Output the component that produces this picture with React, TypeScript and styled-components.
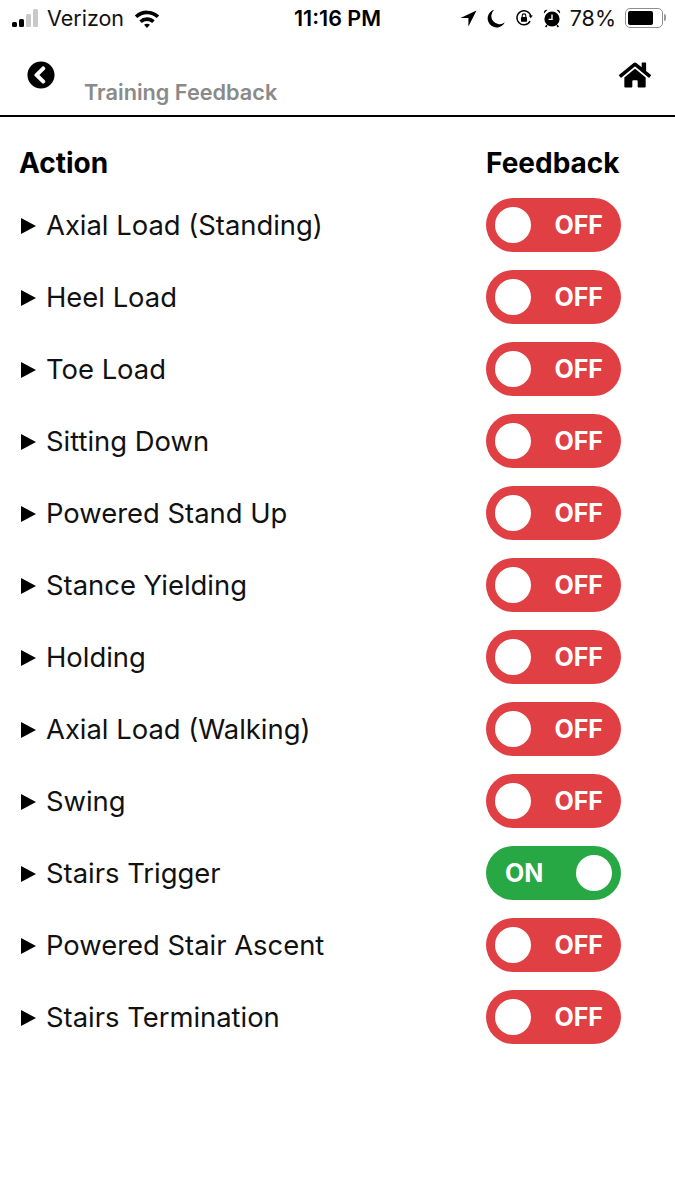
import React from 'react';
import styled, { createGlobalStyle } from 'styled-components';
import { FaChevronCircleLeft, FaHome } from 'react-icons/fa';

const ACTIONS = [
  { name: 'Axial Load (Standing)', on: false },
  { name: 'Heel Load', on: false },
  { name: 'Toe Load', on: false },
  { name: 'Sitting Down', on: false },
  { name: 'Powered Stand Up', on: false },
  { name: 'Stance Yielding', on: false },
  { name: 'Holding', on: false },
  { name: 'Axial Load (Walking)', on: false },
  { name: 'Swing', on: false },
  { name: 'Stairs Trigger', on: true },
  { name: 'Powered Stair Ascent', on: false },
  { name: 'Stairs Termination', on: false },
];

function App() {
  return (
    <Page>
      <GlobalStyle />
      <StatusBar>
        <StatusLeft>
          <Signal>
            <SignalBar $height={5} $active />
            <SignalBar $height={8} $active />
            <SignalBar $height={13} />
            <SignalBar $height={18} />
          </Signal>
          <Carrier>Verizon</Carrier>
          <svg width="28" height="21" viewBox="0 0 26 20" aria-hidden="true">
            <path d="M13 2.5c4.5 0 8.6 1.8 11.6 4.6l-2.4 2.5A13.2 13.2 0 0 0 13 6a13.2 13.2 0 0 0-9.2 3.6L1.400 7.100A16.800 16.800 0 0 1 13 2.500z" fill="#000" />
            <path d="M13 8.900c2.800 0 5.400 1.100 7.300 2.900l-2.400 2.500A7.100 7.100 0 0 0 13 12.400a7.100 7.100 0 0 0-4.900 1.900l-2.400-2.500A10.500 10.500 0 0 1 13 8.900z" fill="#000" />
            <path d="M13 15c1.100 0 2.100.4 2.800 1L13 19l-2.800-3c.7-.6 1.700-1 2.800-1z" fill="#000" />
          </svg>
        </StatusLeft>
        <Clock>11:16 PM</Clock>
        <StatusRight>
          <StatusIcons>
            <svg width="17" height="17" viewBox="0 0 18 18" aria-hidden="true">
              <path d="M17.500.5.500 8.600h8.400v8.900z" fill="#000" />
            </svg>
            <svg width="18" height="19" viewBox="0 0 18 19" aria-hidden="true">
              <path d="M7.200.8A9 9 0 1 0 17.800 13.300 8 8 0 0 1 7.200.8z" fill="#000" />
            </svg>
            <svg width="18" height="18" viewBox="0 0 20 20" aria-hidden="true">
              <path d="M16.800 13.500A7.800 7.800 0 1 1 17.600 8" fill="none" stroke="#000" strokeWidth="1.600" />
              <path d="M15.300 7.200h4.400l-2.200 3z" fill="#000" />
              <rect x="6.600" y="9" width="6.800" height="5.200" rx="1" fill="#000" />
              <path d="M8 9V7.400a2 2 0 0 1 4 0V9" fill="none" stroke="#000" strokeWidth="1.200" />
            </svg>
            <svg width="18" height="20" viewBox="0 0 18 20" aria-hidden="true">
              <circle cx="9" cy="11" r="7.600" fill="#000" />
              <path d="M9 6.500V11.400H5.600" fill="none" stroke="#fff" strokeWidth="1.400" />
              <path d="M1 5.500 4.600 1.800a3 3 0 0 0-3.600 3.700zM17 5.500 13.400 1.800a3 3 0 0 1 3.600 3.700z" fill="#000" />
              <path d="M4 17.200 2.600 19M14 17.200 15.400 19" stroke="#000" strokeWidth="1.600" />
            </svg>
          </StatusIcons>
          <Percent>78%</Percent>
          <Battery>
            <BatteryFill />
          </Battery>
        </StatusRight>
      </StatusBar>

      <Header>
        <BackButton aria-label="Back">
          <FaChevronCircleLeft size={28} />
        </BackButton>
        <Title>Training Feedback</Title>
        <HomeButton aria-label="Home">
          <FaHome size={32} />
        </HomeButton>
      </Header>

      <Table>
        <HeadRow>
          <HeadCell>Action</HeadCell>
          <FeedbackHead>Feedback</FeedbackHead>
        </HeadRow>
        {ACTIONS.map((action) => (
          <Row key={action.name}>
            <Label>
              <Arrow />
              {action.name}
            </Label>
            <Toggle $on={action.on}>
              <ToggleText>{action.on ? 'ON' : 'OFF'}</ToggleText>
              <Knob />
            </Toggle>
          </Row>
        ))}
      </Table>
    </Page>
  );
}

const GlobalStyle = createGlobalStyle`
  html, body {
    margin: 0;
    padding: 0;
    background: #fff;
  }
  body {
    font-family: Inter, "Liberation Sans", sans-serif;
    color: #000;
  }
`;

const Page = styled.div`
  width: 675px;
  height: 1200px;
  overflow: hidden;
  background: #fff;
`;

const StatusBar = styled.div`
  display: grid;
  grid-template-columns: 1fr auto 1fr;
  align-items: center;
  height: 36px;
  padding: 0 12px;
`;

const StatusLeft = styled.div`
  display: flex;
  align-items: center;
  gap: 9px;
`;

const Signal = styled.div`
  display: flex;
  align-items: flex-end;
  gap: 2px;
  height: 18px;
`;

const SignalBar = styled.span<{ $height: number; $active?: boolean }>`
  width: 5px;
  height: ${(props) => props.$height}px;
  border-radius: 1.5px;
  background: ${(props) => (props.$active ? '#000' : '#c9c9c9')};
`;

const Carrier = styled.span`
  font-size: 21.5px;
  color: #111;
`;

const Clock = styled.span`
  font-size: 21.5px;
  font-weight: 600;
`;

const StatusRight = styled.div`
  display: flex;
  align-items: center;
  justify-content: flex-end;
  gap: 9px;
`;

const StatusIcons = styled.div`
  display: flex;
  align-items: center;
  gap: 10px;
`;

const Percent = styled.span`
  font-size: 21.5px;
  color: #111;
`;

const Battery = styled.div`
  position: relative;
  display: flex;
  width: 38px;
  height: 20px;
  padding: 2px;
  box-sizing: border-box;
  border: 1.5px solid #8e8e8e;
  border-radius: 5px;

  &::after {
    content: '';
    position: absolute;
    top: 5px;
    right: -4px;
    width: 2px;
    height: 7px;
    border-radius: 0 2px 2px 0;
    background: #999;
  }
`;

const BatteryFill = styled.div`
  width: 78%;
  border-radius: 2px;
  background: #000;
`;

const Header = styled.header`
  display: flex;
  height: 81px;
  padding: 25px 24px 0 27px;
  box-sizing: border-box;
  border-bottom: 2px solid #000;
`;

const BackButton = styled.div`
  display: flex;
  width: 28px;
  height: 28px;
  color: #000;
`;

const Title = styled.h1`
  flex: 1;
  margin: 18px 0 0 29px;
  font-size: 21.7px;
  line-height: 26px;
  font-weight: 600;
  color: #8a8a8a;
`;

const HomeButton = styled.div`
  display: flex;
  width: 32px;
  height: 32px;
  margin-top: -2px;
  color: #000;
`;

const Table = styled.div`
  display: flex;
  flex-direction: column;
  padding: 0 54px 0 19px;
`;

const HeadRow = styled.div`
  display: flex;
  align-items: center;
  justify-content: space-between;
  height: 64px;
  margin: 14px 0 3px;
`;

const HeadCell = styled.div`
  font-size: 28px;
  font-weight: 700;
  line-height: 32px;
`;

const FeedbackHead = styled(HeadCell)`
  width: 135px;
  white-space: nowrap;
`;

const Row = styled.div`
  display: flex;
  align-items: center;
  justify-content: space-between;
  height: 54px;
  margin-bottom: 18px;
`;

const Label = styled.div`
  display: flex;
  align-items: center;
  font-size: 27.4px;
  color: #111;
`;

const Arrow = styled.span`
  width: 0;
  height: 0;
  margin: 2px 10px 0 2px;
  border-style: solid;
  border-width: 8px 0 8px 15px;
  border-color: transparent transparent transparent #000;
`;

const Toggle = styled.div<{ $on: boolean }>`
  display: flex;
  flex-direction: ${(props) => (props.$on ? 'row' : 'row-reverse')};
  align-items: center;
  justify-content: space-between;
  width: 135px;
  height: 54px;
  box-sizing: border-box;
  padding: ${(props) => (props.$on ? '0 9px 0 19px' : '0 18px 0 9px')};
  border-radius: 27px;
  background: ${(props) => (props.$on ? '#28a745' : '#e04044')};
`;

const ToggleText = styled.span`
  font-size: 25px;
  font-weight: 700;
  color: #fff;
`;

const Knob = styled.span`
  width: 36px;
  height: 36px;
  border-radius: 50%;
  background: #fff;
`;

export default App;
